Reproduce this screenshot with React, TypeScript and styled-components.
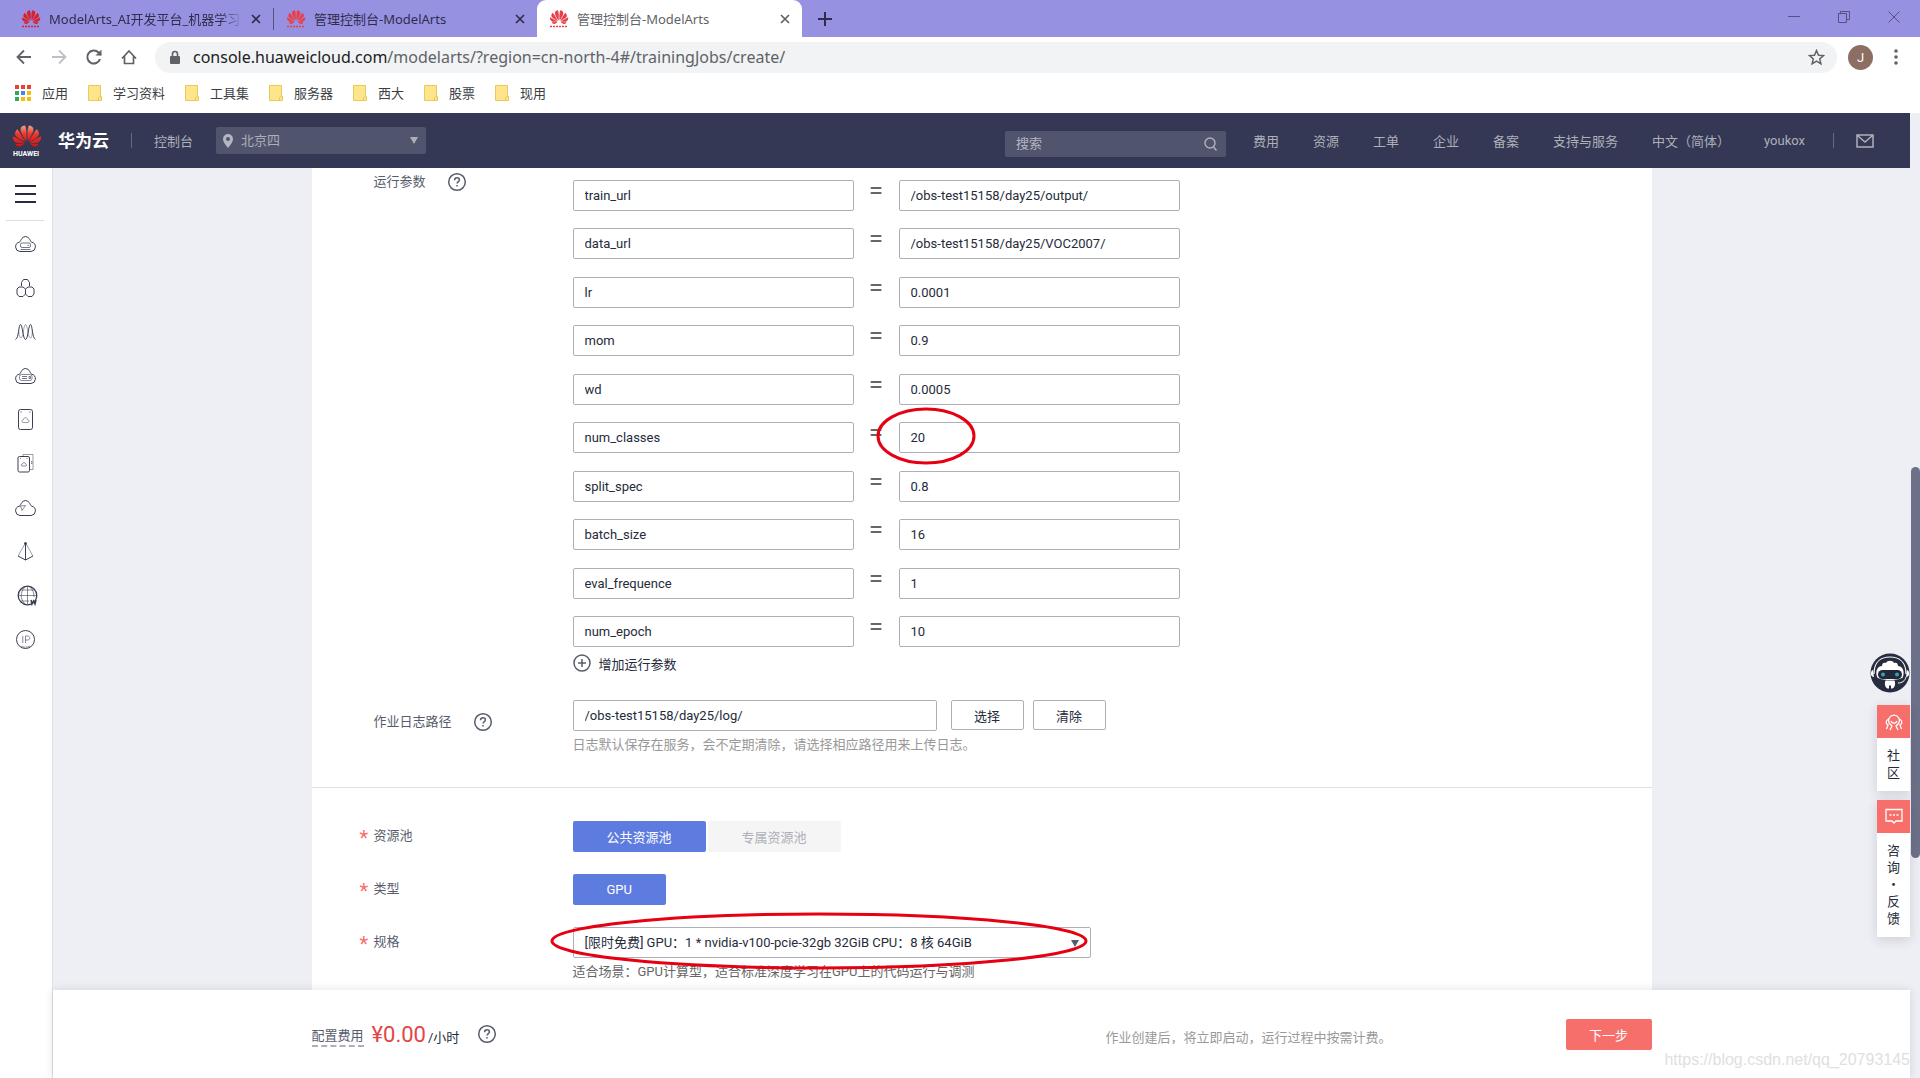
import React from "react";
import styled, { createGlobalStyle } from "styled-components";

const Global = createGlobalStyle`
  *, *::before, *::after { box-sizing: border-box; }
  body { margin: 0; background: #fff; overflow: hidden; }
  body, button, input, select {
    font-family: Roboto, "Noto Sans CJK SC", sans-serif;
    font-size: 13px;
  }
  button { padding: 0; border: 0; background: none; color: inherit; cursor: pointer; }
  a { color: inherit; text-decoration: none; }
  svg { display: block; flex: none; }
`;

const uiFont = `"Noto Sans", "Noto Sans CJK SC", sans-serif`;

const Window = styled.div`
  display: flex;
  flex-direction: column;
  height: 100vh;
`;

/* ---------- browser frame ---------- */
const TabBar = styled.div`
  display: flex;
  align-items: stretch;
  height: 37px;
  background: #9692e1;
  font-family: ${uiFont};
`;
const Tab = styled.div<{ $active?: boolean }>`
  display: flex;
  align-items: center;
  gap: 8px;
  width: ${(p) => (p.$active ? 265 : 263)}px;
  padding: 0 12px;
  color: ${(p) => (p.$active ? "#5f6368" : "#2f2d4d")};
  background: ${(p) => (p.$active ? "#fff" : "transparent")};
  border-radius: 9px 9px 0 0;
`;
const FirstTab = styled(Tab)`
  width: 274px;
  padding-left: 21px;
  border-right: 1px solid #55527f;
  border-radius: 0;
  height: 22px;
  align-self: center;
`;
const TabTitle = styled.span<{ $fade?: boolean }>`
  flex: 1;
  overflow: hidden;
  white-space: nowrap;
  line-height: 20px;
  ${(p) => p.$fade && "mask-image: linear-gradient(90deg, #000 88%, transparent);"}
`;
const IconButton = styled.button`
  display: flex;
  align-items: center;
  justify-content: center;
  flex: none;
`;
const NewTab = styled(IconButton)`
  width: 46px;
  color: #2f2d4d;
`;
const WindowButtons = styled.div`
  display: flex;
  align-items: center;
  gap: 38px;
  margin-left: auto;
  padding: 0 20px 4px 0;
  color: #55527f;
`;

const Toolbar = styled.div`
  display: flex;
  align-items: center;
  height: 40px;
  padding: 0 20px 0 14px;
  color: #5f6368;
`;
const NavButtons = styled.div`
  display: flex;
  gap: 15px;
  margin-right: 16px;
`;
const AddressBar = styled.div`
  display: flex;
  align-items: center;
  flex: 1;
  height: 31px;
  padding: 0 12px 0 13px;
  gap: 11px;
  border-radius: 16px;
  background: #f1f3f4;
`;
const Url = styled.div`
  flex: 1;
  font-family: ${uiFont};
  font-size: 16px;
  line-height: 24px;
  outline: none;
  color: #5f6368;
  white-space: nowrap;
  b { font-weight: 400; color: #202124; }
`;
const Avatar = styled.button`
  width: 25px;
  height: 25px;
  margin: 0 19px 0 11px;
  border-radius: 50%;
  background: #8d6e63;
  color: #fff;
`;

const Bookmarks = styled.nav`
  display: flex;
  align-items: center;
  gap: 20px;
  height: 36px;
  padding: 0 0 5px 15px;
  color: #3c4043;
  font-family: ${uiFont};
`;
const Bookmark = styled.a`
  display: flex;
  align-items: center;
  gap: 11px;
  line-height: 20px;
`;

/* ---------- page ---------- */
const Page = styled.div`
  display: flex;
  flex: 1;
  min-height: 0;
`;
const Console = styled.div`
  position: relative;
  display: flex;
  flex-direction: column;
  flex: 1;
  min-width: 0;
`;
const ScrollTrack = styled.div`
  width: 10px;
  padding: 354px 0 0 1px;
  background: #eeeff5;
`;
const ScrollThumb = styled.div`
  height: 391px;
  border-radius: 5px;
  background: #6c7089;
`;

const Header = styled.header`
  display: flex;
  align-items: center;
  height: 55px;
  padding: 0 36px 0 13px;
  background: #343854;
  color: #adb0b8;
`;
const Brand = styled.a`
  display: flex;
  align-items: center;
  gap: 17px;
  color: #fff;
  font-size: 17px;
  font-weight: 700;
  line-height: 24px;
`;
const Separator = styled.span<{ $space: string }>`
  width: 1px;
  height: 15px;
  margin: ${(p) => p.$space};
  background: #666a80;
`;
const RegionBox = styled.label`
  display: flex;
  align-items: center;
  gap: 8px;
  width: 210px;
  height: 27px;
  margin-left: 23px;
  padding: 0 8px 0 7px;
  border-radius: 2px;
  background: #50546c;
`;
const HeaderSelect = styled.select`
  flex: 1;
  padding: 0;
  border: 0;
  appearance: none;
  background: none;
  color: inherit;
`;
const SearchBox = styled.label`
  display: flex;
  align-items: center;
  width: 221px;
  height: 26px;
  margin: 6px 27px 0 auto;
  padding: 0 8px 0 11px;
  border-radius: 2px;
  background: #50546c;
`;
const SearchInput = styled.input`
  flex: 1;
  min-width: 0;
  padding: 0;
  border: 0;
  background: none;
  color: inherit;
  &::placeholder { color: #b4b6c2; }
`;
const HeaderNav = styled.nav`
  display: flex;
  align-items: center;
  gap: 34px;
  white-space: nowrap;
`;

const Body = styled.div`
  display: flex;
  flex: 1;
  min-height: 0;
`;
const Sidebar = styled.aside`
  display: flex;
  flex-direction: column;
  align-items: center;
  width: 53px;
  padding-right: 2px;
  border-right: 1px solid #dfe1e8;
  background: #fff;
  color: #3b3f55;
`;
const MenuButton = styled(IconButton)`
  width: 38px;
  height: 53px;
  border-bottom: 1px solid #dcdde3;
`;
const SideLink = styled.a`
  display: flex;
  align-items: center;
  justify-content: center;
  width: 51px;
  height: 44px;
`;
const Main = styled.main`
  display: flex;
  flex-direction: column;
  flex: 1;
  min-width: 0;
`;
const Viewport = styled.div`
  flex: 1;
  min-height: 0;
  padding: 0 40px;
  overflow: hidden;
  background: #eeeff5;
`;
const Panel = styled.div`
  max-width: 1340px;
  margin: 0 auto;
  background: #fff;
`;
const Section = styled.section<{ $last?: boolean }>`
  display: flex;
  flex-direction: column;
  gap: ${(p) => (p.$last ? 22 : 26)}px;
  padding: ${(p) => (p.$last ? "33px 48px 60px" : "0 48px 32px")};
  border-bottom: 1px solid #dfe1e6;
`;
const Field = styled.div`
  display: grid;
  grid-template-columns: 213px 1fr;
  align-items: start;
`;
const FieldLabel = styled.label<{ $required?: boolean }>`
  display: grid;
  grid-template-columns: 14px auto auto;
  justify-content: start;
  align-items: center;
  padding-top: 2px;
  line-height: 20px;
  color: #575d6c;
  &::before {
    content: "${(p) => (p.$required ? "*" : "")}";
    padding-top: 5px;
    color: #f66f6a;
    font-size: 20px;
  }
`;
const HelpLabel = styled(FieldLabel)<{ $low?: boolean }>`
  padding-top: ${(p) => (p.$low ? 12 : 4)}px;
  svg { margin-left: 21px; }
`;
const ParamList = styled.div`
  display: grid;
  align-content: space-between;
  min-height: 479px;
  padding-top: 12px;
`;
const ParamRow = styled.div`
  position: relative;
  display: grid;
  grid-template-columns: 281px 45px 281px;
`;
const Equals = styled.span`
  color: #666;
  font-size: 26px;
  line-height: 20px;
  text-align: center;
`;
const TextInput = styled.input<{ $wide?: boolean }>`
  width: ${(p) => (p.$wide ? 364 : 281)}px;
  height: 31px;
  padding: 0 11px;
  border: 1px solid #adb0b8;
  border-radius: 2px;
  background: #fff;
  color: #252b3a;
`;
const AddButton = styled.button`
  display: flex;
  align-items: center;
  gap: 8px;
  height: 20px;
  margin: 6px 0 1px;
  color: #252b3a;
  svg { color: #575d6c; }
`;
const PathControls = styled.div`
  display: grid;
  grid-template-columns: auto auto;
  justify-content: start;
  gap: 14px;
`;
const Controls = styled.div<{ $gap: number }>`
  display: flex;
  gap: ${(p) => p.$gap}px;
`;
const OutlineButton = styled.button`
  width: 73px;
  height: 30px;
  border: 1px solid #adb0b8;
  border-radius: 2px;
  color: #252b3a;
`;
const Hint = styled.p<{ $dark?: boolean }>`
  margin: 4px 0 0;
  line-height: 20px;
  color: ${(p) => (p.$dark ? "#666" : "#999")};
`;
const Choice = styled.button<{ $on?: boolean }>`
  height: 31px;
  padding: 0 34px;
  border-radius: 2px;
  background: ${(p) => (p.$on ? "#5e7ce0" : "#f5f5f6")};
  color: ${(p) => (p.$on ? "#fff" : "#adb0b8")};
`;
const SelectWrap = styled.div`
  position: relative;
  width: 518px;
`;
const SpecSelect = styled.select`
  display: block;
  width: 100%;
  height: 31px;
  padding: 0 11px;
  border: 1px solid #adb0b8;
  border-radius: 2px;
  appearance: none;
  background: #fff;
  color: #252b3a;
`;
const SelectArrow = styled.span`
  position: absolute;
  right: 12px;
  top: 13px;
  border: solid transparent;
  border-width: 7px 4px 0;
  border-top-color: #575d6c;
`;
const Arrow = styled.span`
  border: solid transparent;
  border-width: 7px 4px 0;
  border-top-color: #adb0b8;
`;
const Mark = styled.svg<{ $left: number; $top: number }>`
  position: absolute;
  left: ${(p) => p.$left}px;
  top: ${(p) => p.$top}px;
  pointer-events: none;
  overflow: visible;
`;

const Footer = styled.footer`
  position: relative;
  z-index: 1;
  height: 88px;
  padding: 0 40px;
  background: #fff;
  box-shadow: 0 0 8px rgba(37, 43, 58, 0.14);
`;
const FooterInner = styled.div`
  display: flex;
  align-items: center;
  max-width: 1340px;
  height: 88px;
  margin: 0 auto;
`;
const FeeLabel = styled.span`
  border-bottom: 2px dashed #adb0b8;
  line-height: 18px;
  margin-top: 6px;
  color: #575d6c;
`;
const Price = styled.span`
  margin-left: 8px;
  color: #e54545;
  font-size: 22px;
`;
const Unit = styled.span`
  margin: 4px 18px 0 2px;
  color: #252b3a;
`;
const Notice = styled.span`
  margin: 5px 174px 0 auto;
  color: #999;
`;
const NextButton = styled.button`
  width: 86px;
  height: 31px;
  border-radius: 2px;
  background: #f66f6a;
  color: #fff;
`;
const Watermark = styled.span`
  position: absolute;
  right: 0;
  bottom: 7px;
  color: #e0e0e0;
  font-family: "Liberation Sans", Arial, sans-serif;
  font-size: 16px;
  line-height: 22px;
`;

const FloatBar = styled.div`
  position: absolute;
  right: 0;
  top: 540px;
  z-index: 2;
  display: flex;
  flex-direction: column;
  align-items: flex-end;
`;
const FloatCard = styled.a<{ $gap: number }>`
  display: flex;
  flex-direction: column;
  align-items: center;
  width: 33px;
  margin-top: ${(p) => p.$gap}px;
  padding-bottom: 10px;
  background: #fff;
  box-shadow: 0 3px 12px rgba(37, 43, 58, 0.16);
  color: #252b3a;
`;
const FloatIcon = styled.span`
  display: flex;
  align-items: center;
  justify-content: center;
  width: 33px;
  height: 33px;
  margin-bottom: 9px;
  background: #f66f6a;
`;
const FloatText = styled.span`
  width: 14px;
  line-height: 17px;
  line-break: anywhere;
  text-align: center;
`;

/* ---------- drawings ---------- */
const PETALS =
  "M3.67 6.14S1.82 7.91 1.72 9.78v.35c.08 1.51 1.22 2.4 1.22 2.4 1.83 1.79 6.26 4.04 7.3 4.55 0 0 .06.03.1-.01l.02-.04v-.04C7.52 10.8 3.67 6.14 3.67 6.14zM9.65 18.6c-.02-.08-.1-.08-.1-.08l-7.38.26c.8 1.43 2.15 2.53 3.56 2.2.96-.25 3.16-1.78 3.88-2.3.06-.05.04-.09.04-.09zm.08-.78C6.49 15.63.21 12.28.21 12.28c-.15.46-.2.9-.21 1.3v.07c0 1.07.4 1.82.4 1.82.8 1.69 2.34 2.2 2.34 2.2.7.3 1.4.31 1.4.31.12.02 4.4 0 5.54 0 .05 0 .08-.05.08-.05v-.06c0-.03-.03-.05-.03-.05zM9.06 3.19a3.42 3.42 0 00-2.57 3.15v.41c.03.6.16 1.05.16 1.05.66 2.9 3.86 7.65 4.55 8.65.05.05.1.03.1.03a.1.1 0 00.06-.1c1.06-10.6-1.11-13.42-1.11-13.42-.32.02-1.19.23-1.19.23zm8.299 2.27s-.49-1.8-2.44-2.28c0 0-.57-.14-1.17-.22 0 0-2.18 2.81-1.12 13.43.01.07.06.08.06.08.07.03.1-.03.1-.03.72-1.03 3.9-5.76 4.55-8.64 0 0 .36-1.4.02-2.34zm-2.92 13.07s-.07 0-.09.05c0 0-.01.07.03.1.7.51 2.85 2 3.88 2.3 0 0 .16.05.43.06h.14c.69-.02 1.9-.37 3-2.26l-7.4-.25zm7.83-8.41c.14-2.06-1.94-3.97-1.94-3.98 0 0-3.85 4.66-6.67 10.8 0 0-.03.08.02.13l.04.01h.06c1.06-.53 5.46-2.77 7.28-4.54 0 0 1.15-.93 1.21-2.42zm1.52 2.14s-6.28 3.37-9.52 5.55c0 0-.05.04-.03.11 0 0 .03.06.07.06 1.16 0 5.56 0 5.67-.02 0 0 .57-.02 1.27-.29 0 0 1.56-.5 2.37-2.27 0 0 .73-1.45.17-3.14z";

const Favicon = ({ color }: { color: string }) => (
  <svg width="20" height="20" viewBox="0 0 20 20">
    <path d={PETALS} fill={color} transform="translate(1 -1) scale(.76)" />
    <path d="M1 17.500h18" stroke={color} strokeWidth="1.500" strokeDasharray="2 1" />
  </svg>
);

const BrandLogo = () => (
  <svg width="28" height="32" viewBox="0 0 28 32" role="img" aria-label="HUAWEI">
    <defs>
      <linearGradient id="petal" x1="0" y1="0" x2="0" y2="1">
        <stop offset="0" stopColor="#f2a48a" />
        <stop offset=".4" stopColor="#e8392c" />
        <stop offset="1" stopColor="#d8120f" />
      </linearGradient>
    </defs>
    <path d={PETALS} fill="url(#petal)" transform="translate(0 -3) scale(1.167)" />
    <text x="0" y="31" fill="#fff" fontSize="7" fontWeight="700">HUAWEI</text>
  </svg>
);

const Close = ({ color }: { color: string }) => (
  <svg width="10" height="10" viewBox="0 0 10 10" stroke={color} strokeWidth="1.700">
    <path d="M1 1l8 8M9 1L1 9" />
  </svg>
);

const Folder = () => (
  <svg width="14" height="16" viewBox="0 0 14 16">
    <path d="M.5.500h12v11h1v4H.500z" fill="#fee58c" stroke="#e8c95a" />
    <path d="M10.500 15.500v-3l2-1" fill="none" stroke="#e8c95a" />
  </svg>
);

const Apps = () => (
  <svg width="16" height="16" viewBox="0 0 16 16">
    {["#ea4335", "#ea4335", "#ea4335", "#34a853", "#4285f4", "#fbbc05", "#34a853", "#fbbc05", "#fbbc05"].map((c, i) => (
      <rect key={i} x={(i % 3) * 6} y={Math.floor(i / 3) * 6} width="4" height="4" fill={c} />
    ))}
  </svg>
);

const Help = () => (
  <svg width="20" height="20" viewBox="0 0 20 20" fill="none" stroke="#575d6c" strokeWidth="1.500">
    <circle cx="10" cy="10" r="8.300" />
    <path d="M7.600 8.200c0-1.500 1-2.400 2.400-2.400s2.400.9 2.400 2.100c0 1.600-2.300 1.800-2.300 3.700" />
    <path d="M10 13v1.600" />
  </svg>
);

const CLOUD = "M5 18.500a4.700 4.700 0 0 1-.6-9.300C6 8.500 6 4 10.500 3.500c4.500.5 4.500 5 6.100 5.700a4.700 4.700 0 0 1-.6 9.300z";
const sideIcons: { name: string; draw: React.ReactNode }[] = [
  { name: "弹性云服务器", draw: <><path d={CLOUD} /><rect x="5.500" y="10" width="10" height="4.500" rx="1.500" strokeOpacity=".7" /><path d="M5.500 16.500h10M12.500 12.300h1.500" strokeOpacity=".7" /></> },
  { name: "裸金属服务器", draw: <><path d="M6.500 9V5.500l2-3h4l2 3V9M4 10h4l2.500 2v5L8 19.500H4L2 17v-5zM17 10h-4l-2.500 2v5l2.500 2.500h4l2-2.500v-5z" /></> },
  { name: "弹性伸缩", draw: <><path d="M.5 18.500C4 17 3.500 3.500 5.500 3.500s2.500 15 5 15 3-15 5-15 1.500 13.500 5 15" /><path d="M3.500 9c.5 4 1 8 2.500 8 2.500 0 2.500-13.500 4.500-13.500S13 17 15.500 17c1.500 0 1.500-4 2-8" strokeOpacity=".45" /></> },
  { name: "云容器引擎", draw: <><path d={CLOUD} /><rect x="4.500" y="9.500" width="12.500" height="6" rx="2" strokeOpacity=".6" /><path d="M7 11.500h5M7 13.500h5M14 11.500h1.500v2H14z" strokeOpacity=".7" /></> },
  { name: "云硬盘", draw: <><rect x="3.500" y=".5" width="14" height="20" rx="2" /><path d="M5.500 3h1M14.500 3h1" /><path d="M8 13.500c-1.800-.5-1.200-2.800.5-2.800.5-3 3.500-3 4 0 1.800 0 2.300 2.300.5 2.800z" strokeOpacity=".5" /></> },
  { name: "云备份", draw: <><rect x="3" y="3.500" width="11.500" height="15.500" rx="1.500" /><path d="M8 3.500v-2h10v15h-3" strokeOpacity=".5" /><path d="M5 5.500h1M11.500 5.500h1M7 13c-1.500-.5-.5-2 .5-2 .5-2 2.500-2 3 0 1 0 1.500 1.500.5 2zM16 8.500h1v2h-1" strokeOpacity=".6" /></> },
  { name: "对象存储", draw: <><path d={CLOUD} /><path d="M5.500 9l5-.5L7 13.500z" strokeOpacity=".6" /></> },
  { name: "虚拟私有云", draw: <><path d="M10.500 2v17M3 15l7.500 4 7.500-4" /><path d="M10.500 2L3 15M10.500 2L18 15" strokeOpacity=".5" /><circle cx="10.500" cy="2.500" r="1" fill="currentColor" /></> },
  { name: "域名解析", draw: <g transform="translate(2 0)"><circle cx="10.500" cy="10.500" r="9.300" strokeWidth="1.300" /><path d="M10.500 1.500v18M1.500 10.500h18M4 5h13M4 16h8M8 2c-5 5-5 12 0 17M13 2c3 3 4 6 4 10" strokeOpacity=".6" /><path d="M14 15l1 4 1.500-3 1.500 3 1-4" strokeWidth="1.500" /></g> },
  { name: "弹性公网IP", draw: <><circle cx="10.500" cy="10.500" r="9" /><path d="M7.800 7v7M10.500 14V7h2c3 0 3 4 0 4h-2" strokeOpacity=".6" /><path d="M6 17c3 1.500 6 1.500 9 0" strokeOpacity=".5" /></> },
];

const Robot = () => (
  <svg width="40" height="40" viewBox="0 0 40 40">
    <circle cx="20" cy="20" r="19.500" fill="#272d40" />
    <path d="M4 21C4 8 12 4 20 4s16 4 16 17" fill="none" stroke="#fff" strokeWidth="1.200" />
    <path d="M7 24c-2-7 1-11 5-11 0-3 2-4 4-3 1-3 7-3 8 0 2-1 4 0 4 3 4 0 7 4 5 11-2 4-24 4-26 0z" fill="#fff" />
    <rect x="8" y="17" width="24" height="9" rx="4.500" fill="#21283a" />
    <circle cx="13" cy="21.500" r="2" fill="#3f9cb5" />
    <circle cx="27" cy="21.500" r="2" fill="#3f9cb5" />
    <path d="M3 17c-3 1-3 7 1 7zM37 17c3 1 3 7-1 7z" fill="#fff" />
    <path d="M15.500 27.500h9c1.500 4 0 7-2 8h-1.500v-3h-2v3h-1.500c-2-1-3.500-4-2-8z" fill="#fff" />
    <path d="M36 24c-1 4-4 6-8 6" fill="none" stroke="#fff" />
  </svg>
);

const params: [string, string][] = [
  ["train_url", "/obs-test15158/day25/output/"],
  ["data_url", "/obs-test15158/day25/VOC2007/"],
  ["lr", "0.0001"],
  ["mom", "0.9"],
  ["wd", "0.0005"],
  ["num_classes", "20"],
  ["split_spec", "0.8"],
  ["batch_size", "16"],
  ["eval_frequence", "1"],
  ["num_epoch", "10"],
];

export default function App() {
  return (
    <Window>
      <Global />
      <TabBar>
        <FirstTab>
          <Favicon color="#d9202c" />
          <TabTitle $fade>ModelArts_AI开发平台_机器学习</TabTitle>
          <IconButton aria-label="关闭"><Close color="#2f2d4d" /></IconButton>
        </FirstTab>
        <Tab>
          <Favicon color="#e8404a" />
          <TabTitle>管理控制台-ModelArts</TabTitle>
          <IconButton aria-label="关闭"><Close color="#2f2d4d" /></IconButton>
        </Tab>
        <Tab $active>
          <Favicon color="#e8404a" />
          <TabTitle>管理控制台-ModelArts</TabTitle>
          <IconButton aria-label="关闭"><Close color="#5f6368" /></IconButton>
        </Tab>
        <NewTab aria-label="新标签页">
          <svg width="14" height="14" viewBox="0 0 14 14" stroke="currentColor" strokeWidth="2"><path d="M7 0v14M0 7h14" /></svg>
        </NewTab>
        <WindowButtons>
          <IconButton aria-label="最小化"><svg width="12" height="12" viewBox="0 0 12 12" stroke="currentColor"><path d="M0 5.500h12" /></svg></IconButton>
          <IconButton aria-label="还原"><svg width="12" height="12" viewBox="0 0 12 12" stroke="currentColor" fill="none"><path d="M.5 2.500h8v9h-8zM2.500 2.500v-2h9v8h-3" /></svg></IconButton>
          <IconButton aria-label="关闭窗口"><svg width="12" height="12" viewBox="0 0 12 12" stroke="currentColor"><path d="M.5.500l11 11M11.500.500l-11 11" /></svg></IconButton>
        </WindowButtons>
      </TabBar>
      <Toolbar>
        <NavButtons>
          <IconButton aria-label="后退"><svg width="20" height="20" viewBox="0 0 20 20" fill="none" stroke="#5f6368" strokeWidth="1.800"><path d="M17 10H4M10 3.500L3.500 10l6.500 6.500" /></svg></IconButton>
          <IconButton aria-label="前进"><svg width="20" height="20" viewBox="0 0 20 20" fill="none" stroke="#bdc1c6" strokeWidth="1.800"><path d="M3 10h13M10 3.500l6.500 6.500-6.500 6.500" /></svg></IconButton>
          <IconButton aria-label="刷新"><svg width="20" height="20" viewBox="0 0 20 20" fill="none" stroke="#5f6368" strokeWidth="2"><path d="M16 12a6.500 6.500 0 1 1-1.500-6.500L17 8" /><path d="M17.500 2.500v6h-6z" fill="#5f6368" stroke="none" /></svg></IconButton>
          <IconButton aria-label="主页"><svg width="20" height="20" viewBox="0 0 20 20" fill="none" stroke="#5f6368" strokeWidth="1.700"><path d="M3 11.500L10 4l7 7.500M5.500 9.500v7h9v-7" /></svg></IconButton>
        </NavButtons>
        <AddressBar>
          <svg width="14" height="15" viewBox="0 0 14 15"><rect x="2" y="6" width="10" height="8" rx="1" fill="#5f6368" /><path d="M4.500 6V4a2.500 2.500 0 0 1 5 0v2" fill="none" stroke="#5f6368" strokeWidth="1.600" /></svg>
          <Url role="textbox" aria-label="地址" tabIndex={0}>
            <b>console.huaweicloud.com</b>/modelarts/?region=cn-north-4#/trainingJobs/create/
          </Url>
          <IconButton aria-label="收藏"><svg width="17" height="16" viewBox="0 0 17 16" fill="none" stroke="#5f6368" strokeWidth="1.500"><path d="M8.500 1.500l2 4.700 5 .4-3.800 3.300 1.200 4.900-4.400-2.600-4.400 2.600 1.200-4.900L1.500 6.600l5-.4z" /></svg></IconButton>
        </AddressBar>
        <Avatar>J</Avatar>
        <IconButton aria-label="菜单"><svg width="8" height="16" viewBox="0 0 8 16" fill="#5f6368"><circle cx="4" cy="2" r="1.800" /><circle cx="4" cy="8" r="1.800" /><circle cx="4" cy="14" r="1.800" /></svg></IconButton>
      </Toolbar>
      <Bookmarks>
        <Bookmark href="#"><Apps />应用</Bookmark>
        {["学习资料", "工具集", "服务器", "西大", "股票", "现用"].map((b) => (
          <Bookmark href="#" key={b}><Folder />{b}</Bookmark>
        ))}
      </Bookmarks>

      <Page>
        <Console>
          <Header>
            <Brand href="#"><BrandLogo />华为云</Brand>
            <Separator $space="0 22px 0 22px" />
            <a href="#">控制台</a>
            <RegionBox>
              <svg width="10" height="14" viewBox="0 0 10 14"><path fillRule="evenodd" fill="#b4b6c2" d="M5 0a5 5 0 0 1 5 5c0 3-3 6.500-5 9-2-2.500-5-6-5-9a5 5 0 0 1 5-5zm0 3a2 2 0 1 0 0 4 2 2 0 0 0 0-4z" /></svg>
              <HeaderSelect aria-label="区域"><option>北京四</option></HeaderSelect>
              <Arrow />
            </RegionBox>
            <SearchBox>
              <SearchInput aria-label="搜索" placeholder="搜索" />
              <svg width="14" height="14" viewBox="0 0 14 14" fill="none" stroke="#adb0b8" strokeWidth="1.500"><circle cx="6" cy="6" r="5" /><path d="M9.500 10l3 3.500" /></svg>
            </SearchBox>
            <HeaderNav>
              {["费用", "资源", "工单", "企业", "备案", "支持与服务", "中文（简体）", "youkox"].map((n) => (
                <a href="#" key={n}>{n}</a>
              ))}
            </HeaderNav>
            <Separator $space="0 22px 0 28px" />
            <IconButton aria-label="消息">
              <svg width="18" height="14" viewBox="0 0 18 14" fill="none" stroke="#adb0b8" strokeWidth="1.500"><path d="M1 1h16v12H1zM1.500 1.500L9 8l7.500-6.500" /></svg>
            </IconButton>
          </Header>
          <Body>
            <Sidebar>
              <MenuButton aria-label="服务列表">
                <svg width="21" height="20" viewBox="0 0 21 20" stroke="#252b3a" strokeWidth="2"><path d="M0 2h21M0 10h21M0 18h21" /></svg>
              </MenuButton>
              {sideIcons.map((s) => (
                <SideLink href="#" key={s.name} aria-label={s.name}>
                  <svg width="21" height="21" viewBox="0 0 21 21" fill="none" stroke="currentColor" overflow="visible">{s.draw}</svg>
                </SideLink>
              ))}
            </Sidebar>
            <Main>
              <Viewport>
                <Panel>
                  <Section>
                    <Field>
                      <HelpLabel as="div">运行参数<Help /></HelpLabel>
                      <div>
                        <ParamList>
                          {params.map(([k, v]) => (
                            <ParamRow key={k}>
                              <TextInput aria-label={`${k} 名称`} defaultValue={k} />
                              <Equals>=</Equals>
                              <TextInput aria-label={k} defaultValue={v} />
                              {k === "num_classes" && (
                                <Mark $left={304} $top={-14} width="98" height="56" viewBox="0 0 98 56">
                                  <ellipse cx="49" cy="28" rx="48" ry="27" fill="none" stroke="#e60012" strokeWidth="3" />
                                </Mark>
                              )}
                            </ParamRow>
                          ))}
                        </ParamList>
                        <AddButton>
                          <svg width="18" height="18" viewBox="0 0 18 18" fill="none" stroke="currentColor" strokeWidth="1.500"><circle cx="9" cy="9" r="8" /><path d="M9 5v8M5 9h8" /></svg>
                          增加运行参数
                        </AddButton>
                      </div>
                    </Field>
                    <Field>
                      <HelpLabel htmlFor="log" $low>作业日志路径<Help /></HelpLabel>
                      <div>
                        <PathControls>
                          <TextInput id="log" $wide defaultValue="/obs-test15158/day25/log/" />
                          <Controls $gap={9}>
                            <OutlineButton>选择</OutlineButton>
                            <OutlineButton>清除</OutlineButton>
                          </Controls>
                        </PathControls>
                        <Hint>日志默认保存在服务，会不定期清除，请选择相应路径用来上传日志。</Hint>
                      </div>
                    </Field>
                  </Section>
                  <Section $last>
                    <Field>
                      <FieldLabel as="div" $required>资源池</FieldLabel>
                      <Controls $gap={2}>
                        <Choice $on>公共资源池</Choice>
                        <Choice>专属资源池</Choice>
                      </Controls>
                    </Field>
                    <Field>
                      <FieldLabel as="div" $required>类型</FieldLabel>
                      <Controls $gap={2}><Choice $on>GPU</Choice></Controls>
                    </Field>
                    <Field>
                      <FieldLabel htmlFor="spec" $required>规格</FieldLabel>
                      <div>
                        <SelectWrap>
                          <SpecSelect id="spec">
                            <option>[限时免费] GPU：1 * nvidia-v100-pcie-32gb 32GiB CPU：8 核 64GiB</option>
                          </SpecSelect>
                          <SelectArrow />
                          <Mark $left={-22} $top={-14} width="536" height="56" viewBox="0 0 536 56">
                            <ellipse cx="268" cy="28" rx="267" ry="27" fill="none" stroke="#e60012" strokeWidth="3" />
                          </Mark>
                        </SelectWrap>
                        <Hint $dark>适合场景：GPU计算型，适合标准深度学习在GPU上的代码运行与调测</Hint>
                      </div>
                    </Field>
                  </Section>
                </Panel>
              </Viewport>
              <Footer>
                <FooterInner>
                  <FeeLabel>配置费用</FeeLabel>
                  <Price>¥0.00</Price>
                  <Unit>/小时</Unit>
                  <Help />
                  <Notice>作业创建后，将立即启动，运行过程中按需计费。</Notice>
                  <NextButton>下一步</NextButton>
                </FooterInner>
                <Watermark>https://blog.csdn.net/qq_20793145</Watermark>
              </Footer>
            </Main>
          </Body>
          <FloatBar>
            <IconButton aria-label="智能客服"><Robot /></IconButton>
            <FloatCard href="#" $gap={12}>
              <FloatIcon>
                <svg width="18" height="18" viewBox="0 0 18 18" fill="none" stroke="#fff" strokeWidth="1.300"><path d="M4 10a5.500 5.500 0 1 1 10 0M6 8c1 3 5 3 6 0M3.500 6C0 8 1 11 3 12l-1.500 4M4 10l3 3-2 4M14.500 6c3.500 2 2.500 5 .5 6l1.500 4M14 10l-3 3 2 4" /></svg>
              </FloatIcon>
              <FloatText>社区</FloatText>
            </FloatCard>
            <FloatCard href="#" $gap={9}>
              <FloatIcon>
                <svg width="18" height="17" viewBox="0 0 18 17" fill="none" stroke="#fff" strokeWidth="1.300"><path d="M1 1.500h16v11.500h-6l-2 2-2-2H1z" /><path d="M4.500 7h2M8 7h2M11.500 7h2" strokeWidth="1.700" /></svg>
              </FloatIcon>
              <FloatText>咨询・反馈</FloatText>
            </FloatCard>
          </FloatBar>
        </Console>
        <ScrollTrack><ScrollThumb /></ScrollTrack>
      </Page>
    </Window>
  );
}
